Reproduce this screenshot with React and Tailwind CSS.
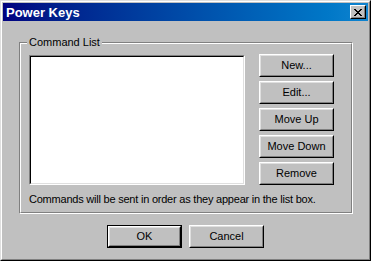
import React from "react";

function Btn({ children, def = false, className = "" }) {
  const inner = (
    <div className="w-full h-full border border-t-white border-l-white border-r-black border-b-black">
      <div className="w-full h-full border border-t-[#dfdfdf] border-l-[#dfdfdf] border-r-[#808080] border-b-[#808080] flex items-center justify-center text-[11px] text-black leading-none">
        {children}
      </div>
    </div>
  );
  if (def) {
    return (
      <div className={"w-[75px] h-[23px] border border-black " + className}>
        {inner}
      </div>
    );
  }
  return <div className={"w-[75px] h-[23px] " + className}>{inner}</div>;
}

export default function App() {
  const buttons = ["New...", "Edit...", "Move Up", "Move Down", "Remove"];
  return (
    <div className="w-[371px] h-[261px] font-['Liberation_Sans',Arial,sans-serif] bg-[#c0c0c0] border border-t-[#dfdfdf] border-l-[#dfdfdf] border-r-black border-b-black">
      <div className="w-full h-full border border-t-white border-l-white border-r-[#808080] border-b-[#808080] p-px flex flex-col">
        {/* Title bar */}
        <div className="h-[18px] flex items-center justify-between pl-[3px] pr-[2px] bg-gradient-to-r from-[#000080] to-[#1084d0]">
          <span className="text-white font-bold text-[13px] leading-none">Power Keys</span>
          <div className="w-[16px] h-[14px] border border-t-white border-l-white border-r-black border-b-black bg-[#c0c0c0]">
            <div className="w-full h-full border border-t-[#c0c0c0] border-l-[#c0c0c0] border-r-[#808080] border-b-[#808080] flex items-center justify-center">
              <svg width="8" height="7" viewBox="0 0 8 7" shapeRendering="crispEdges">
                <path d="M0 0h2v1h-2zM6 0h2v1h-2zM1 1h2v1h-2zM5 1h2v1h-2zM2 2h4v1h-4zM3 3h2v1h-2zM2 4h4v1h-4zM1 5h2v1h-2zM5 5h2v1h-2zM0 6h2v1h-2zM6 6h2v1h-2z" fill="black" />
              </svg>
            </div>
          </div>
        </div>

        {/* Group box */}
        <div className="relative ml-[16px] mt-[21px] w-[334px] h-[172px] border border-t-[#808080] border-l-[#808080] border-r-white border-b-white">
          <div className="w-full h-full border border-t-white border-l-white border-r-[#808080] border-b-[#808080] pl-[8px] pt-[11px] flex flex-col">
            <div className="flex">
              <div className="w-[216px] h-[130px] border border-t-[#808080] border-l-[#808080] border-r-white border-b-white">
                <div className="w-full h-full border border-t-black border-l-black border-r-[#dfdfdf] border-b-[#dfdfdf] bg-white" />
              </div>
              <div className="ml-[14px] -mt-px flex flex-col gap-[4px]">
                {buttons.map((b) => (
                  <Btn key={b}>{b}</Btn>
                ))}
              </div>
            </div>
            <div className="mt-[8px] text-[11px] leading-[13px] tracking-[-0.22px] text-black whitespace-nowrap">
              Commands will be sent in order as they appear in the list box.
            </div>
          </div>
          <span className="absolute left-[7px] top-[-7px] px-[2px] bg-[#c0c0c0] text-[11px] leading-[13px] text-black">
            Command List
          </span>
        </div>

        {/* Bottom buttons */}
        <div className="mt-[11px] flex justify-center gap-[7px]">
          <Btn def>OK</Btn>
          <Btn>Cancel</Btn>
        </div>
      </div>
    </div>
  );
}
